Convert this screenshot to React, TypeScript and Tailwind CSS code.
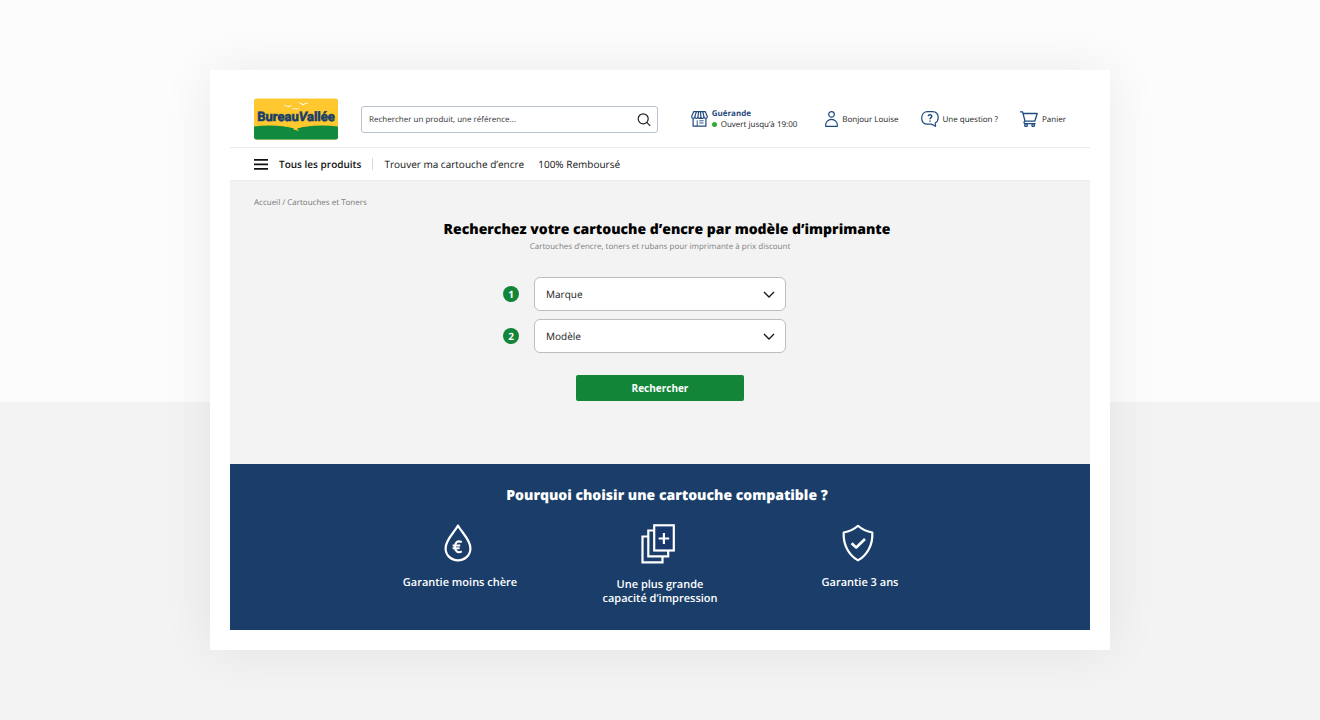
import type { ReactNode } from 'react';

const BENEFITS = [
  { id: 'price', icon: <DropIcon />, lines: ['Garantie moins chère'] },
  { id: 'capacity', icon: <PagesIcon />, lines: ['Une plus grande', 'capacité d’impression'] },
  { id: 'warranty', icon: <ShieldIcon />, lines: ['Garantie 3 ans'] },
];

function Logo() {
  return (
    <svg width="84" height="42" viewBox="0 0 84 42" role="img" aria-label="Bureau Vallée">
      <defs>
        <clipPath id="logo-clip">
          <rect y="0.5" width="84" height="41" rx="2.5" />
        </clipPath>
      </defs>
      <g clipPath="url(#logo-clip)">
        <rect width="84" height="42" fill="#fec82e" />
        <path d="M0 28.5C14 26.8 30 27.5 41 30.5C53 27.5 70 26.8 84 28.5V42H0Z" fill="#128a3e" />
        <path d="M24 27.6C34 28.4 41 30 39.5 31C39 31.8 43 32.2 46 33.6C43.5 31.8 42.5 31 44 30.3C48 28.8 55 28 60 27.6Z" fill="#fec82e" />
      </g>
      <path
        d="M29 7.5C31.5 7 33 7.4 34 8.4C35.3 7.4 36.5 7.2 38 7.4C36 8 35 8.7 34.3 9.4C33 8.3 31.5 7.7 29 7.5ZM43 4.2C45.5 4.2 47.5 4.8 49 6.2C51 5 53 4.5 55.5 4.8C52.5 5.5 50.5 6.3 49.2 7.5C47.5 6 45.5 4.9 43 4.2ZM37.5 10.3C39.5 9.7 41 10 42 10.8C43.3 10 44.5 9.8 46 10C44 10.5 43 11.1 42.3 11.8C41 10.8 39.5 10.4 37.5 10.3Z"
        fill="#fff"
      />
      <text
        x="42"
        y="23"
        textAnchor="middle"
        fill="#1a3e69"
        stroke="#1a3e69"
        strokeWidth="0.6"
        className="font-[Roboto,sans-serif] text-[13px] font-bold"
      >
        Bureau<tspan fontStyle="italic">V</tspan>allée
      </text>
    </svg>
  );
}

function StoreIcon() {
  return (
    <svg width="17" height="16" viewBox="0 0 17 16" fill="none" stroke="#1f4a80" strokeWidth="1.2" strokeLinejoin="round">
      <path d="M2.8 .6H14.2L16.3 5.5C16.3 8 13.2 8 13 5.8C12.8 8 9.9 8 9.8 5.8C9.6 8 7.2 8 7 5.8C6.8 8 3.9 8 3.8 5.8C3.6 8 .6 8 .6 5.5Z" />
      <path d="M5.3 .8L3.8 5.8M7.6 .8L7 5.8M9.5 .8L9.9 5.8M11.8 .8L13 5.8" />
      <path d="M2.1 7.6V15.2H14.9V7.6" />
      <path d="M6.2 15V9.3M8.3 9.8H12.6M8.3 12H12.6" strokeWidth="0.9" />
    </svg>
  );
}

function UserIcon() {
  return (
    <svg width="13" height="16" viewBox="0 0 13 16" fill="none" stroke="#1f4a80" strokeWidth="1.2" strokeLinejoin="round">
      <circle cx="6.5" cy="3.4" r="2.8" />
      <path d="M.7 15.3V13.6C.7 11.3 3 8.3 6.5 8.3S12.3 11.3 12.3 13.6V15.3Z" />
    </svg>
  );
}

function QuestionIcon() {
  return (
    <svg width="18" height="16" viewBox="0 0 18 16" fill="none" stroke="#1f4a80" strokeWidth="1.2" strokeLinejoin="round">
      <path d="M6.6 .7H11.4C15 .7 17.2 3.2 17.2 6.8C17.2 9.2 16.2 10.9 14.2 12L14.6 15.3L10.3 13.1H6.6C3 13.1 .7 10.6 .7 6.9C.7 3.3 3 .7 6.6 .7Z" />
      <path d="M7.2 5.2C7.3 3.3 11 3.3 10.8 5.4C10.7 6.7 9 6.7 9 8.3M9 9.4V10.7" strokeWidth="1.4" />
    </svg>
  );
}

function CartIcon() {
  return (
    <svg width="18" height="16" viewBox="0 0 18 16" fill="none" stroke="#1f4a80" strokeWidth="1.3" strokeLinejoin="round">
      <path d="M0 .8H2.6L5 10.2H14.8L17.2 2.5H3.1M5 10.2C3.7 10.6 3.7 12.7 5 12.7H15.6" />
      <circle cx="6" cy="14.2" r="1.3" />
      <circle cx="13.2" cy="14.2" r="1.3" />
    </svg>
  );
}

function DropIcon() {
  return (
    <svg width="28" height="38" viewBox="0 0 28 38" fill="none" stroke="#fff" strokeWidth="2.2">
      <path d="M14 1.6C10.5 8.5 1.6 15.5 1.6 24.2C1.6 31.2 7 36.3 14 36.3S26.4 31.2 26.4 24.2C26.4 15.5 17.5 8.5 14 1.6Z" strokeLinejoin="round" />
      <path d="M17.8 18.2C13.5 15.8 10.9 18.8 10.9 22.7C10.9 26.8 13.5 29.6 17.8 27.4M8.6 21.5H16.2M8.6 24.3H15.6" strokeWidth="2.1" />
    </svg>
  );
}

function PagesIcon() {
  return (
    <svg width="34" height="40" viewBox="0 0 34 40" fill="none" stroke="#fff" strokeWidth="2.2">
      <path d="M7 12.5H1.5V38.3H21.5V32.5" />
      <path d="M13 6.5H7.3V32.3H27.2V27" />
      <rect x="13.2" y="1.3" width="19.6" height="25.2" fill="#19386e" />
      <path d="M22.9 9V20M17.6 14.5H28.2" />
    </svg>
  );
}

function ShieldIcon() {
  return (
    <svg width="32" height="38" viewBox="0 0 32 38" fill="none" stroke="#fff" strokeWidth="2.2" strokeLinejoin="round">
      <path d="M16 1.8C12 5.4 6.5 7.8 1.7 8.5C1 21 7 31.5 16 36.4C25 31.5 31 21 30.3 8.5C25.5 7.8 20 5.4 16 1.8Z" />
      <path d="M9.6 19.2L14.2 23.5L23 15" strokeWidth="2.6" />
    </svg>
  );
}

function HeaderLink({ icon, children }: { icon: ReactNode; children: ReactNode }) {
  return (
    <a href="#" className="flex items-center gap-1 whitespace-nowrap">
      {icon}
      {children}
    </a>
  );
}

function StepSelect({ step, label }: { step: number; label: string }) {
  const id = `step-${step}`;
  return (
    <div className="flex items-center gap-[15px]">
      <label
        htmlFor={id}
        aria-label={label}
        className="flex size-4 items-center justify-center rounded-full bg-[#128539] text-[10px] leading-none font-bold text-white"
      >
        {step}
      </label>
      <div className="relative w-[252px]">
        <select
          id={id}
          className="block h-[34px] w-full appearance-none rounded-md border border-[#bdbdbd] bg-white pl-[11px] text-[10px] text-[#1a1a1a] [text-rendering:inherit]"
        >
          <option>{label}</option>
        </select>
        <svg
          width="12"
          height="8"
          viewBox="0 0 12 8"
          fill="none"
          stroke="#1a1a1a"
          strokeWidth="1.4"
          className="pointer-events-none absolute top-[14px] right-[11px]"
        >
          <path d="M1 1L6 6L11 1" />
        </svg>
      </div>
    </div>
  );
}

function Header() {
  return (
    <header className="flex items-center px-6 pt-7 pb-[7px] text-[8px] leading-[11px] text-[#222]">
      <a href="#" className="mr-[23px] shrink-0">
        <Logo />
      </a>
      <form className="relative mr-[33px] flex-1">
        <input
          type="text"
          aria-label="Rechercher"
          placeholder="Rechercher un produit, une référence..."
          className="block h-[27px] w-full rounded-[3px] border border-[#b7c1cf] pr-8 pl-[7px] [text-rendering:inherit] placeholder:text-[#333]"
        />
        <button type="button" aria-label="Lancer la recherche" className="absolute top-[7px] right-[7px]">
          <svg width="14" height="14" viewBox="0 0 14 14" fill="none" stroke="#222" strokeWidth="1.2">
            <circle cx="6.2" cy="5.8" r="5" />
            <path d="M9.8 9.4L13.2 12.8" />
          </svg>
        </button>
      </form>
      <a href="#" className="mr-7 flex items-center gap-1 whitespace-nowrap">
        <StoreIcon />
        <span>
          <strong className="block font-bold text-[#1f4a80]">Guérande</strong>
          <span className="flex items-center gap-1">
            <span className="size-[5px] rounded-full bg-[#36a835]" />
            Ouvert jusqu’à 19:00
          </span>
        </span>
      </a>
      <nav className="flex gap-[22px]">
        <HeaderLink icon={<UserIcon />}>Bonjour Louise</HeaderLink>
        <HeaderLink icon={<QuestionIcon />}>Une question ?</HeaderLink>
        <HeaderLink icon={<CartIcon />}>Panier</HeaderLink>
      </nav>
    </header>
  );
}

export default function App() {
  return (
    <div className="min-h-screen bg-linear-to-b from-[#fcfcfc] from-[402px] to-[#f3f3f3] to-[402px] px-6 py-[70px] font-['Open_Sans',sans-serif] [text-rendering:geometricPrecision]">
      <div className="mx-auto max-w-[900px] bg-white px-5 pb-5 shadow-[0_0_50px_rgba(0,0,0,0.07)]">
        <Header />
        <nav className="flex items-center border-y border-[#e9ebee] px-6 py-2 text-[10px] leading-4 text-[#111]">
          <button type="button" className="flex items-center gap-[11px] font-semibold [text-rendering:inherit]">
            <svg width="14" height="11" viewBox="0 0 14 11" fill="#111">
              <path d="M0 0H14V1.8H0ZM0 4.5H14V6.3H0ZM0 9H14V10.8H0Z" />
            </svg>
            Tous les produits
          </button>
          <span className="mx-[11px] h-3 w-px bg-[#d9d9d9]" />
          <a href="#">Trouver ma cartouche d’encre</a>
          <a href="#" className="ml-[14px]">
            100% Remboursé
          </a>
        </nav>

        <main>
          <section className="bg-[#f3f3f3] px-6 pt-4 pb-[63px]">
            <p className="text-[8px] leading-3 text-[#777]">
              <a href="#">Accueil</a> / <a href="#">Cartouches et Toners</a>
            </p>
            <h1 className="mt-[11px] pl-[14px] text-center text-[14px] leading-5 font-extrabold text-black">
              Recherchez votre cartouche d’encre par modèle d’imprimante
            </h1>
            <p className="mt-px text-center text-[8px] leading-3 text-[#808080]">
              Cartouches d’encre, toners et rubans pour imprimante à prix discount
            </p>
            <form className="mt-6 flex flex-col items-center">
              <div className="flex flex-col gap-2 pr-[31px]">
                <StepSelect step={1} label="Marque" />
                <StepSelect step={2} label="Modèle" />
              </div>
              <button
                type="button"
                className="mt-[22px] h-[26px] w-[168px] rounded-xs bg-[#128539] text-[10px] font-bold text-white"
              >
                Rechercher
              </button>
            </form>
          </section>

          <section className="bg-[#1a3e69] px-6 pt-[22px] pb-6 text-white">
            <h2 className="pl-[14px] text-center text-[14px] leading-5 font-extrabold">
              Pourquoi choisir une cartouche compatible ?
            </h2>
            <ul className="mx-auto mt-[18px] grid max-w-[600px] grid-cols-3">
              {BENEFITS.map((b) => (
                <li key={b.id} className="flex flex-col items-center gap-[14px] text-center text-[11px] leading-[14px] font-semibold">
                  <span className="pr-1">{b.icon}</span>
                  <span>
                    {b.lines.map((line) => (
                      <span key={line} className="block">
                        {line}
                      </span>
                    ))}
                  </span>
                </li>
              ))}
            </ul>
          </section>
        </main>
      </div>
    </div>
  );
}
